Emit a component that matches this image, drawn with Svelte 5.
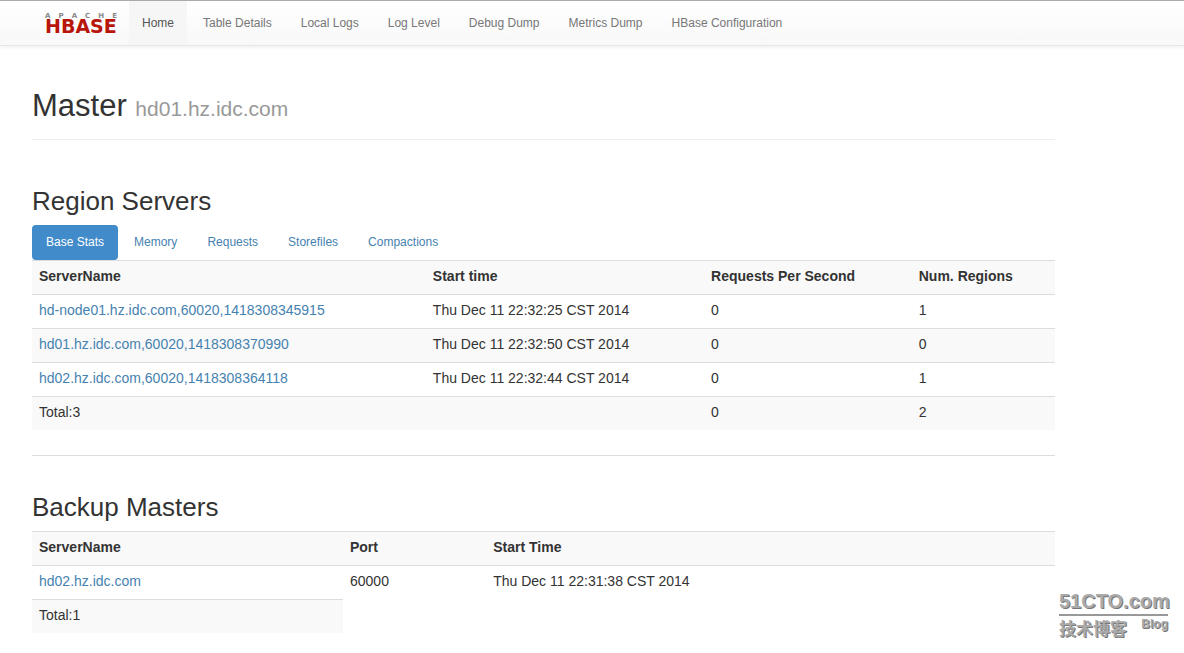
<script>
  const navLinks = [
    'Home',
    'Table Details',
    'Local Logs',
    'Log Level',
    'Debug Dump',
    'Metrics Dump',
    'HBase Configuration',
  ];
  const tabs = ['Base Stats', 'Memory', 'Requests', 'Storefiles', 'Compactions'];

  let activeTab = $state('Base Stats');

  const servers = [
    { name: 'hd-node01.hz.idc.com,60020,1418308345915', start: 'Thu Dec 11 22:32:25 CST 2014', rps: 0, regions: 1 },
    { name: 'hd01.hz.idc.com,60020,1418308370990', start: 'Thu Dec 11 22:32:50 CST 2014', rps: 0, regions: 0 },
    { name: 'hd02.hz.idc.com,60020,1418308364118', start: 'Thu Dec 11 22:32:44 CST 2014', rps: 0, regions: 1 },
  ];
  const backups = [
    { name: 'hd02.hz.idc.com', port: 60000, start: 'Thu Dec 11 22:31:38 CST 2014' },
  ];

  let totalRps = $derived(servers.reduce((sum, s) => sum + s.rps, 0));
  let totalRegions = $derived(servers.reduce((sum, s) => sum + s.regions, 0));
</script>

<header class="navbar">
  <a class="brand" href="#home" aria-label="Apache HBase">
    <span class="apache">
      {#each 'APACHE' as letter}<span>{letter}</span>{/each}
    </span>
    <span class="hbase">HBASE</span>
  </a>
  <nav>
    {#each navLinks as link, i}
      <a href="#nav-{i}" class:active={i === 0}>{link}</a>
    {/each}
  </nav>
</header>

<main>
  <h1>Master <small>hd01.hz.idc.com</small></h1>

  <section>
    <h2>Region Servers</h2>
    <ul class="tabs">
      {#each tabs as tab}
        <li>
          <a href="#{tab}" class:active={tab === activeTab} onclick={() => (activeTab = tab)}>{tab}</a>
        </li>
      {/each}
    </ul>
    <table class="servers">
      <thead>
        <tr>
          <th>ServerName</th>
          <th>Start time</th>
          <th>Requests Per Second</th>
          <th>Num. Regions</th>
        </tr>
      </thead>
      <tbody>
        {#each servers as server}
          <tr>
            <td><a href="#server">{server.name}</a></td>
            <td>{server.start}</td>
            <td>{server.rps}</td>
            <td>{server.regions}</td>
          </tr>
        {/each}
        <tr>
          <td>Total:{servers.length}</td>
          <td></td>
          <td>{totalRps}</td>
          <td>{totalRegions}</td>
        </tr>
      </tbody>
    </table>
  </section>

  <section class="backup">
    <h2>Backup Masters</h2>
    <table class="backups">
      <thead>
        <tr>
          <th>ServerName</th>
          <th>Port</th>
          <th>Start Time</th>
        </tr>
      </thead>
      <tbody>
        {#each backups as master}
          <tr>
            <td><a href="#master">{master.name}</a></td>
            <td>{master.port}</td>
            <td>{master.start}</td>
          </tr>
        {/each}
        <tr>
          <td>Total:{backups.length}</td>
        </tr>
      </tbody>
    </table>
  </section>
</main>

<aside class="watermark">
  <div class="site">51CTO.com</div>
  <div class="sub">
    <span class="cn">技术博客</span>
    <span class="blog">Blog</span>
  </div>
</aside>

<style>
  :global(body) {
    background: #fff;
    color: #333;
    font-family: Arial, "Liberation Sans", sans-serif;
    font-size: 14px;
    line-height: 20px;
  }

  a {
    color: #4682b0;
    text-decoration: none;
  }

  .navbar {
    display: flex;
    border-top: 1px solid #aaa;
    border-bottom: 1px solid #e7e7e7;
    padding-left: 45px;
    background: linear-gradient(#fff, #f8f8f8);
    box-shadow: 0 1px 4px rgba(0, 0, 0, 0.08);
  }

  .brand {
    display: flex;
    flex-direction: column;
    width: 72px;
    padding-top: 11px;
    margin-right: 12px;
    font-family: "DejaVu Sans", sans-serif;
    font-weight: bold;
  }

  .apache {
    display: flex;
    justify-content: space-between;
    color: #888;
    font-size: 7px;
    line-height: 8px;
  }

  .hbase {
    color: #b8160b;
    font-size: 19px;
    line-height: 12px;
  }

  nav {
    display: flex;
    gap: 3px;
  }

  nav a {
    padding: 0 13px;
    color: #777;
    font-size: 12px;
    line-height: 44px;
    white-space: nowrap;
  }

  nav a.active {
    background: #f6f6f6;
    color: #555;
  }

  main {
    max-width: 1023px;
    margin: 0 32px;
  }

  h1,
  h2 {
    margin: 0;
    font-weight: normal;
  }

  h1 {
    padding: 42px 0 12px;
    border-bottom: 1px solid #eee;
    font-size: 31px;
    line-height: 36px;
  }

  h1 small {
    color: #999;
    font-size: 21px;
  }

  h2 {
    padding: 46px 0 8px;
    font-size: 26px;
    line-height: 31px;
  }

  .tabs {
    display: flex;
    gap: 2px;
    margin: 0;
    padding: 0;
    list-style: none;
  }

  .tabs a {
    display: block;
    padding: 0 14px;
    border-radius: 4px;
    font-size: 12px;
    line-height: 35px;
  }

  .tabs a.active {
    background: #428bca;
    color: #fff;
  }

  table {
    width: 100%;
    table-layout: fixed;
    border-collapse: separate;
    border-spacing: 0;
  }

  th,
  td {
    box-sizing: border-box;
    height: 34px;
    padding: 6px 7px 8px;
    border-top: 1px solid #ddd;
    line-height: 19px;
    text-align: left;
  }

  th {
    background: #f9f9f9;
  }

  tbody tr:nth-child(even) td {
    background: #f9f9f9;
  }

  .servers th:nth-child(1) { width: 38.5%; }
  .servers th:nth-child(2) { width: 27.2%; }
  .servers th:nth-child(3) { width: 20.3%; }

  .backups th:nth-child(1) { width: 30.4%; }
  .backups th:nth-child(2) { width: 14%; }

  .backup {
    margin-top: 25px;
    border-top: 1px solid #ddd;
  }

  .backup h2 {
    padding-top: 36px;
  }

  .watermark {
    position: absolute;
    right: 16px;
    bottom: 13px;
    width: 109px;
    color: #aaa;
    font-weight: bold;
    text-shadow: 1px 1px 0 #777;
  }

  .site {
    border-bottom: 2px solid #999;
    font-size: 20px;
    line-height: 26px;
  }

  .sub {
    display: flex;
    justify-content: space-between;
  }

  .cn {
    font-family: "Noto Sans CJK SC", sans-serif;
    font-size: 17px;
    line-height: 24px;
  }

  .blog {
    font-size: 12px;
    line-height: 16px;
  }
</style>
